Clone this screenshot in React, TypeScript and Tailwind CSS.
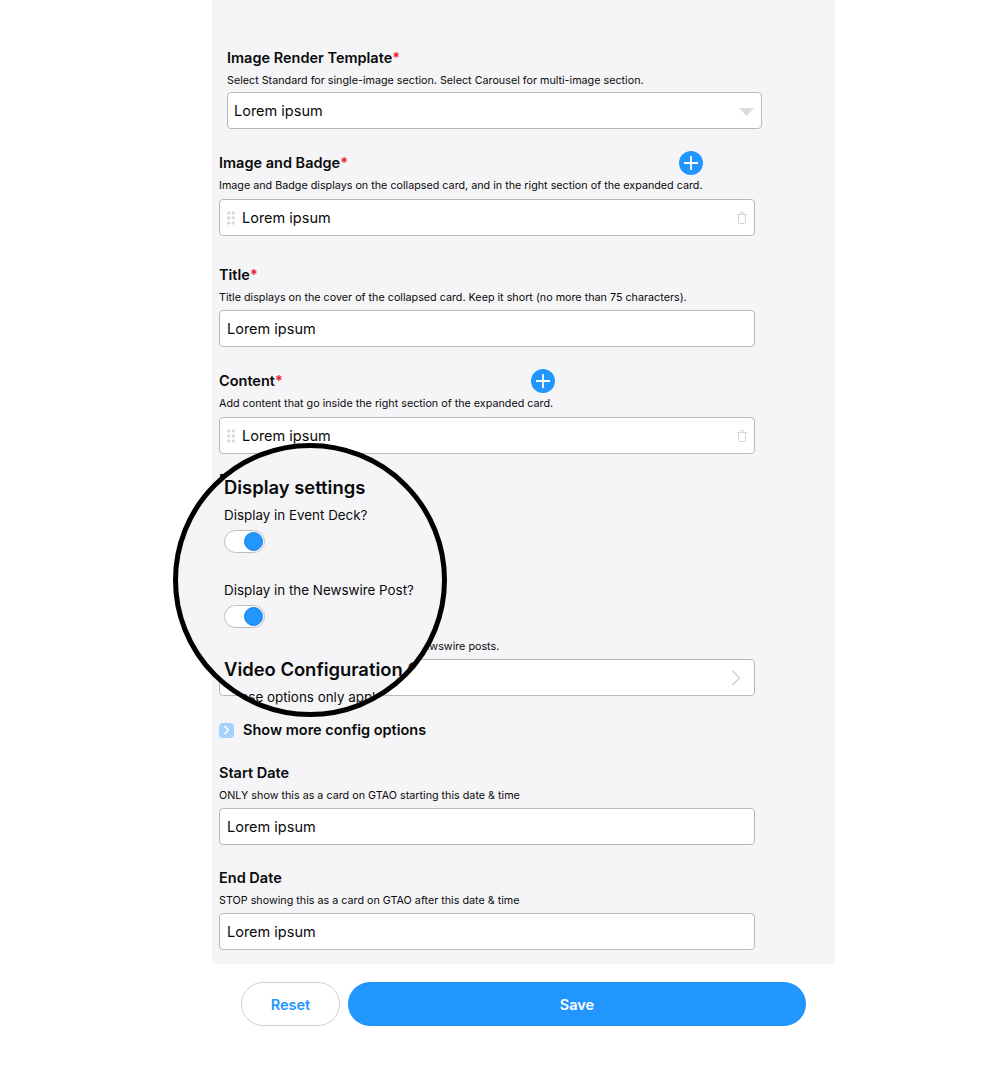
import type { ReactNode } from 'react';

const font = { fontFamily: 'Inter, "Liberation Sans", sans-serif' };

function Label({ text, required }: { text: string; required?: boolean }) {
  return (
    <div className="text-[14.5px] leading-6 font-semibold text-[#0a0a0a] whitespace-nowrap">
      {text}
      {required && <span className="text-[#f0162f]">*</span>}
    </div>
  );
}

function Hint({ children }: { children: ReactNode }) {
  return <p className="mt-[3px] text-[10.75px] leading-4 text-[#0a0a0a] whitespace-nowrap">{children}</p>;
}

function Box({ children, className }: { children?: ReactNode; className: string }) {
  return (
    <div
      className={`flex h-[37px] items-center rounded border border-[#b9b9bd] bg-white text-[14.5px] text-[#0a0a0a] ${className}`}
    >
      {children}
    </div>
  );
}

function PlusButton() {
  return (
    <button className="flex h-6 w-6 items-center justify-center rounded-full bg-[#2196ff]" aria-label="Add">
      <svg width="14" height="14" viewBox="0 0 14 14" fill="none" stroke="#fff" strokeWidth="1.8">
        <path d="M7 0v14M0 7h14" />
      </svg>
    </button>
  );
}

function Grip() {
  return (
    <svg width="8" height="14" viewBox="0 0 8 14" fill="#d9d9d9" className="mr-[7px] shrink-0">
      <circle cx="1.7" cy="2" r="1.7" />
      <circle cx="6.3" cy="2" r="1.7" />
      <circle cx="1.7" cy="7" r="1.7" />
      <circle cx="6.3" cy="7" r="1.7" />
      <circle cx="1.7" cy="12" r="1.7" />
      <circle cx="6.3" cy="12" r="1.7" />
    </svg>
  );
}

function Trash() {
  return (
    <svg width="10" height="12" viewBox="0 0 10 12" fill="none" stroke="#d5d5d5" strokeWidth="1" className="ml-auto">
      <path d="M1.5 3v7.500a1 1 0 0 0 1 1h5a1 1 0 0 0 1-1V3M0 2.500h10M3.500 2.500V.5h3v2" />
    </svg>
  );
}

function DragRow() {
  return (
    <Box className="mt-[5px] w-[536px] px-[7px]">
      <Grip />
      <span>Lorem ipsum</span>
      <Trash />
    </Box>
  );
}

function Toggle() {
  return (
    <div className="flex h-[23px] w-[41px] items-center justify-end rounded-full border border-[#bdbdc2] bg-white pr-[1px]">
      <div className="h-[19px] w-[19px] rounded-full border border-[#1b7fe0] bg-[#2196ff]" />
    </div>
  );
}

function Magnifier() {
  return (
    <div className="absolute left-[173px] top-[443px] h-[274px] w-[274px] overflow-hidden rounded-full border-[5px] border-black bg-[#f5f5f8] pl-[46px] pt-[27px] text-[#0a0a0a]">
      <h2 className="text-[18.4px] leading-6 font-semibold whitespace-nowrap">Display settings</h2>
      <p className="mt-[7px] text-[13.4px] leading-[18px] whitespace-nowrap">Display in Event Deck?</p>
      <div className="mt-[6px]">
        <Toggle />
      </div>
      <p className="mt-[28px] text-[13.4px] leading-[18px] whitespace-nowrap">Display in the Newswire Post?</p>
      <div className="mt-[6px]">
        <Toggle />
      </div>
      <h2 className="mt-[29px] text-[18.4px] leading-6 font-semibold whitespace-nowrap">Video Configuration Options</h2>
      <p className="mt-[7px] text-[13.4px] leading-[18px] whitespace-nowrap">These options only apply to video cards.</p>
    </div>
  );
}

export default function App() {
  return (
    <div className="relative h-[1091px] w-[1008px] overflow-hidden bg-white" style={font}>
      <div className="ml-[212px] h-[964px] w-[623px] bg-[#f5f5f8] pl-[7px] pt-[46px]">
        <div className="ml-2">
          <Label text="Image Render Template" required />
          <Hint>Select Standard for single-image section. Select Carousel for multi-image section.</Hint>
          <Box className="mt-[3px] w-[535px] px-[6px]">
            <span>Lorem ipsum</span>
            <svg width="15" height="8" viewBox="0 0 15 8" fill="#dcdcdc" className="ml-auto mr-px mt-[2px]">
              <path d="M0 0h15L7.500 8z" />
            </svg>
          </Box>
        </div>

        <div className="mt-[22px]">
          <div className="flex w-[484px] items-center justify-between">
            <Label text="Image and Badge" required />
            <PlusButton />
          </div>
          <Hint>Image and Badge displays on the collapsed card, and in the right section of the expanded card.</Hint>
          <DragRow />
        </div>

        <div className="mt-[27px]">
          <Label text="Title" required />
          <Hint>Title displays on the cover of the collapsed card. Keep it short (no more than 75 characters).</Hint>
          <Box className="mt-1 w-[536px] px-[7px]">Lorem ipsum</Box>
        </div>

        <div className="mt-[22px]">
          <div className="flex w-[336px] items-center justify-between">
            <Label text="Content" required />
            <PlusButton />
          </div>
          <Hint>Add content that go inside the right section of the expanded card.</Hint>
          <DragRow />
        </div>

        <div className="mt-[14px] h-[144px]">
          <Label text="Event" />
        </div>

        <div>
          <Label text="Newswire Tag" />
          <Hint>Choose the tag this card will link to on Newswire posts.</Hint>
          <Box className="mt-1 w-[536px] px-[7px]">
            <svg width="10" height="16" viewBox="0 0 10 16" fill="none" stroke="#d0d0d0" strokeWidth="1.4" className="ml-auto mr-[6px]">
              <path d="M1.500 1l7 7-7 7" />
            </svg>
          </Box>
        </div>

        <div className="mt-6 flex items-center gap-[9px]">
          <div className="flex h-[15px] w-[15px] items-center justify-center rounded-sm bg-[#a3d2fb]">
            <svg width="7" height="10" viewBox="0 0 7 10" fill="none" stroke="#fff" strokeWidth="1.6">
              <path d="M1.500 1l4 4-4 4" />
            </svg>
          </div>
          <span className="text-[14.5px] leading-5 font-semibold text-[#0a0a0a]">Show more config options</span>
        </div>

        <div className="mt-[21px]">
          <Label text="Start Date" />
          <Hint>ONLY show this as a card on GTAO starting this date &amp; time</Hint>
          <Box className="mt-1 w-[536px] px-[7px]">Lorem ipsum</Box>
        </div>

        <div className="mt-[21px]">
          <Label text="End Date" />
          <Hint>STOP showing this as a card on GTAO after this date &amp; time</Hint>
          <Box className="mt-1 w-[536px] px-[7px]">Lorem ipsum</Box>
        </div>
      </div>

      <div className="ml-[241px] mt-[18px] flex w-[565px] gap-2">
        <button className="h-11 w-[99px] rounded-full border border-[#cfcfcf] bg-white pt-px text-[14.5px] font-semibold text-[#2196ff]">
          Reset
        </button>
        <button className="h-11 flex-1 rounded-full bg-[#2196ff] pt-px text-[14.5px] font-semibold text-white">Save</button>
      </div>

      <Magnifier />
    </div>
  );
}
